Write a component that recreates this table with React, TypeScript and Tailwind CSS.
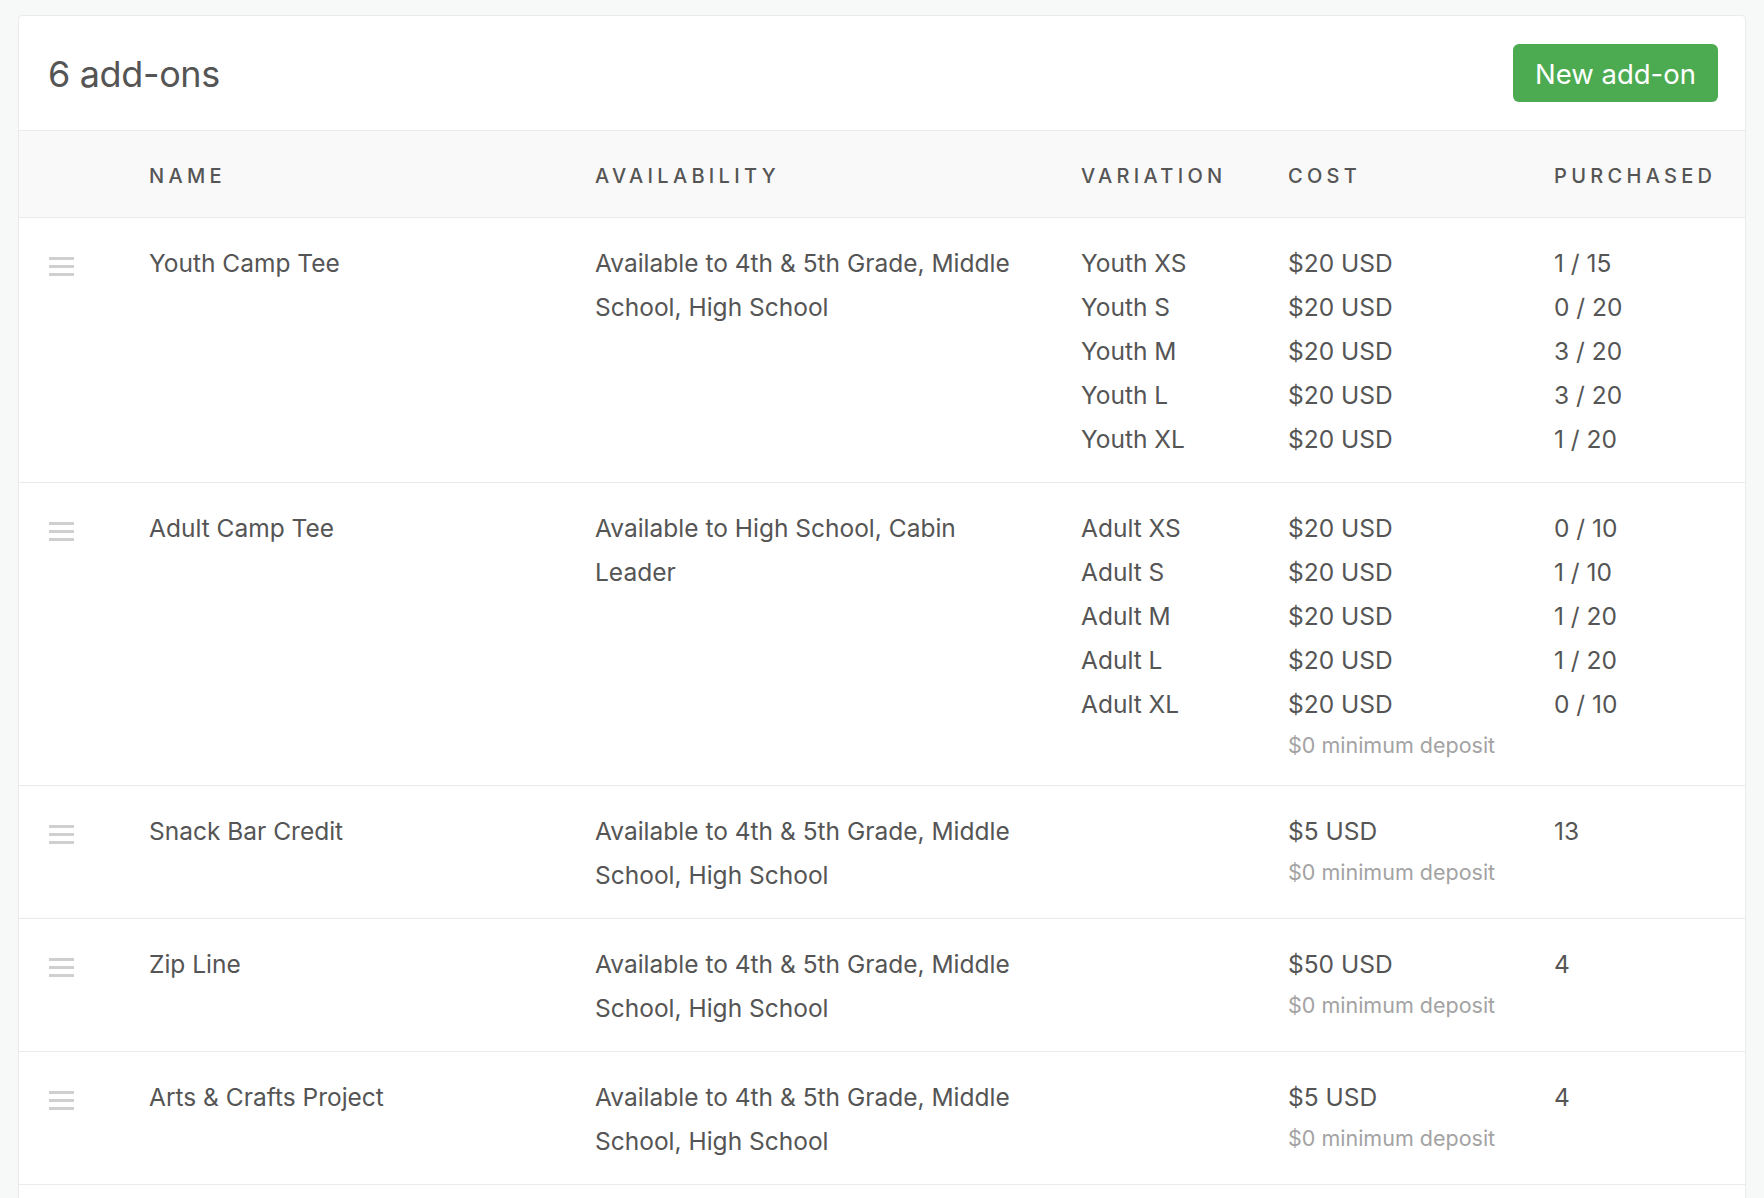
import React from 'react'

interface Variation {
  label: string
  cost: string
  purchased: string
}

interface AddOn {
  name: string
  availability: string
  variations?: Variation[]
  cost?: string
  purchased?: string
  deposit?: string
}

const addOns: AddOn[] = [
  {
    name: 'Youth Camp Tee',
    availability: 'Available to 4th & 5th Grade, Middle School, High School',
    variations: [
      { label: 'Youth XS', cost: '$20 USD', purchased: '1 / 15' },
      { label: 'Youth S', cost: '$20 USD', purchased: '0 / 20' },
      { label: 'Youth M', cost: '$20 USD', purchased: '3 / 20' },
      { label: 'Youth L', cost: '$20 USD', purchased: '3 / 20' },
      { label: 'Youth XL', cost: '$20 USD', purchased: '1 / 20' },
    ],
  },
  {
    name: 'Adult Camp Tee',
    availability: 'Available to High School, Cabin Leader',
    variations: [
      { label: 'Adult XS', cost: '$20 USD', purchased: '0 / 10' },
      { label: 'Adult S', cost: '$20 USD', purchased: '1 / 10' },
      { label: 'Adult M', cost: '$20 USD', purchased: '1 / 20' },
      { label: 'Adult L', cost: '$20 USD', purchased: '1 / 20' },
      { label: 'Adult XL', cost: '$20 USD', purchased: '0 / 10' },
    ],
    deposit: '$0 minimum deposit',
  },
  {
    name: 'Snack Bar Credit',
    availability: 'Available to 4th & 5th Grade, Middle School, High School',
    cost: '$5 USD',
    purchased: '13',
    deposit: '$0 minimum deposit',
  },
  {
    name: 'Zip Line',
    availability: 'Available to 4th & 5th Grade, Middle School, High School',
    cost: '$50 USD',
    purchased: '4',
    deposit: '$0 minimum deposit',
  },
  {
    name: 'Arts & Crafts Project',
    availability: 'Available to 4th & 5th Grade, Middle School, High School',
    cost: '$5 USD',
    purchased: '4',
    deposit: '$0 minimum deposit',
  },
  {
    name: 'Camp Photo Package',
    availability: 'Available to 4th & 5th Grade, Middle School, High School',
    cost: '$15 USD',
    purchased: '2',
    deposit: '$0 minimum deposit',
  },
]

const cols = 'grid grid-cols-[130px_446px_486px_207px_266px_1fr]'

function DragHandle() {
  return (
    <div className="flex flex-col gap-[5.5px] w-[25px] pt-[16px]">
      <span className="block h-[2.5px] bg-[#cfcfcf]" />
      <span className="block h-[2.5px] bg-[#cfcfcf]" />
      <span className="block h-[2.5px] bg-[#cfcfcf]" />
    </div>
  )
}

export default function App() {
  return (
    <div
      className="min-h-screen bg-[#f7f8f8] px-[18px] pt-[15px] text-[#555]"
      style={{ fontFamily: 'Inter, "Noto Sans", sans-serif' }}
    >
      <div className="bg-white border border-[#ebebeb] rounded-[4px] overflow-hidden">
        {/* header */}
        <div className="flex items-center justify-between h-[115px] pl-[29px] pr-[27px] border-b border-[#ebebeb]">
          <h1 className="text-[36px] font-normal text-[#555] tracking-[-0.01em] pt-[2px]">6 add-ons</h1>
          <button className="h-[58px] px-[22px] pt-[3px] bg-[#4cab51] text-white text-[27.5px] rounded-[6px]">
            New add-on
          </button>
        </div>

        {/* column titles */}
        <div className={`${cols} h-[87px] pt-[4px] items-center bg-[#f9f9f9] border-b border-[#ebebeb] text-[20px] font-medium tracking-[0.215em] text-[#555]`}>
          <div />
          <div>NAME</div>
          <div>AVAILABILITY</div>
          <div>VARIATION</div>
          <div>COST</div>
          <div>PURCHASED</div>
        </div>

        {/* rows */}
        {addOns.map((a, i) => (
          <div key={i} className={`${cols} pt-[23px] pb-[21px] border-b border-[#ebebeb] text-[24.5px] leading-[44px]`}>
            <div className="pl-[30px]">
              <DragHandle />
            </div>
            <div>{a.name}</div>
            <div className="max-w-[432px]">{a.availability}</div>
            <div>
              {a.variations?.map((v) => (
                <div key={v.label}>{v.label}</div>
              ))}
            </div>
            <div>
              {a.variations
                ? a.variations.map((v) => <div key={v.label}>{v.cost}</div>)
                : <div>{a.cost}</div>}
              {a.deposit && (
                <div className="text-[21.5px] leading-[38px] text-[#a3a3a3]">{a.deposit}</div>
              )}
            </div>
            <div>
              {a.variations
                ? a.variations.map((v) => <div key={v.label}>{v.purchased}</div>)
                : <div>{a.purchased}</div>}
            </div>
          </div>
        ))}
      </div>
    </div>
  )
}
